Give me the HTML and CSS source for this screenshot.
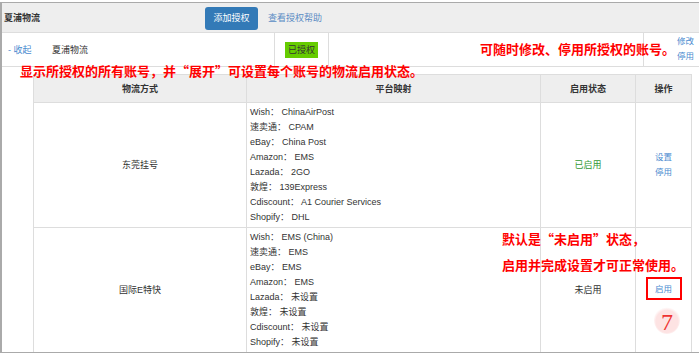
FILE: index.html
```html
<!DOCTYPE html>
<html>
<head>
<meta charset="utf-8">
<title>授权物流</title>
<meta name="viewport" content="width=device-width, initial-scale=1">
<link rel="stylesheet" href="styles.css">
</head>
<body>

<div class="panel">
  <div class="panel-head">
    <span class="panel-title">夏浦物流</span>
    <a class="btn-add">添加授权</a>
    <a class="help-link">查看授权帮助</a>
  </div>

  <div class="account-row">
    <div class="cell-name">
      <a class="toggle">- 收起</a>
      <span>夏浦物流</span>
    </div>
    <div class="cell-state"><span class="badge-ok">已授权</span></div>
    <div class="cell-blank"></div>
    <div class="cell-ops">
      <a>修改</a>
      <a>停用</a>
    </div>
  </div>

  <div class="detail">
    <table class="ship-table">
      <colgroup>
        <col class="c1"><col class="c2"><col class="c3"><col class="c4">
      </colgroup>
      <thead>
        <tr>
          <th>物流方式</th>
          <th>平台映射</th>
          <th>启用状态</th>
          <th>操作</th>
        </tr>
      </thead>
      <tbody>
        <tr class="row-a">
          <td class="center">东莞挂号</td>
          <td class="map">
            Wish： ChinaAirPost<br>
            速卖通： CPAM<br>
            eBay： China Post<br>
            Amazon： EMS<br>
            Lazada： 2GO<br>
            敦煌： 139Express<br>
            Cdiscount： A1 Courier Services<br>
            Shopify： DHL
          </td>
          <td class="center on">已启用</td>
          <td class="center ops"><a>设置</a><br><a>停用</a></td>
        </tr>
        <tr class="row-b">
          <td class="center">国际E特快</td>
          <td class="map">
            Wish： EMS (China)<br>
            速卖通： EMS<br>
            eBay： EMS<br>
            Amazon： EMS<br>
            Lazada： 未设置<br>
            敦煌： 未设置<br>
            Cdiscount： 未设置<br>
            Shopify： 未设置
          </td>
          <td class="center">未启用</td>
          <td class="center ops"><a>启用</a></td>
        </tr>
      </tbody>
    </table>
  </div>

  <!-- annotations drawn over the screen -->
  <div class="note note-1">显示所授权的所有账号，并“展开”可设置每个账号的物流启用状态。</div>
  <div class="note note-2">可随时修改、停用所授权的账号。</div>
  <div class="note note-3">默认是“未启用”状态，<br>启用并完成设置才可正常使用。</div>
  <div class="mark-box"></div>
  <div class="step-num">7</div>
</div>
<div class="below"></div>

</body>
</html>
```
FILE: styles.css
```css
* {
  box-sizing: border-box;
}

body {
  margin: 0;
  padding-top: 2px;
  background: #fff;
  font-family: "Liberation Sans", "Noto Sans CJK SC", sans-serif;
  font-size: 9px;
  color: #333;
}

a {
  color: #4a8bd0;
  cursor: pointer;
}

.panel {
  position: relative;
  border-top: 1px solid #aaa;
  border-left: 2px solid #aaa;
  border-bottom: 1px solid #aaa;
}

.panel-head {
  height: 30px;
  display: flex;
  align-items: center;
  background: #eee;
  border-bottom: 1px solid #ddd;
  padding-left: 2px;
}

.panel-title {
  font-weight: bold;
  width: 201px;
}

.btn-add {
  background: #337ab7;
  color: #fff;
  border-radius: 3px;
  height: 23px;
  line-height: 23px;
  width: 53px;
  text-align: center;
  margin-top: 1px;
}

.help-link {
  margin-left: 10px;
  color: #5a8cc4;
}

.account-row {
  display: flex;
  height: 34px;
  border-bottom: 1px solid #ddd;
}

.cell-name {
  width: 273px;
  border-right: 1px solid #ddd;
  display: flex;
  align-items: center;
  padding-left: 6px;
}

.toggle {
  width: 44px;
}

.cell-state {
  width: 54px;
  border-right: 1px solid #ddd;
  display: flex;
  align-items: center;
  justify-content: center;
}

.badge-ok {
  background: #6c0;
  color: #333;
  padding: 1px 3px;
  line-height: 14px;
}

.cell-blank {
  width: 315px;
  border-right: 1px solid #ddd;
}

.cell-ops {
  display: flex;
  flex-direction: column;
  justify-content: center;
  padding-left: 33px;
  font-size: 8.5px;
  line-height: 15px;
  padding-bottom: 2px;
}

.detail {
  padding: 7px 8px 0 31px;
}

.ship-table {
  width: 658px;
  border-collapse: collapse;
  table-layout: fixed;
  border: 1px solid #ddd;
  border-bottom: none;
}

.c1 { width: 213px; }
.c2 { width: 294px; }
.c3 { width: 95px; }
.c4 { width: 56px; }

.ship-table th {
  background: #eee;
  height: 28px;
  font-weight: bold;
  border: 1px solid #ddd;
}

.ship-table td {
  border-left: 1px solid #ddd;
  border-right: 1px solid #ddd;
  vertical-align: middle;
  line-height: 15px;
}

.row-a td {
  border-bottom: 1px solid #ddd;
  height: 124px;
}

.row-b td {
  height: 122px;
}

.center {
  text-align: center;
}

.map {
  padding: 2px 3px;
}

.on {
  color: #393;
}

.ops {
  font-size: 8.5px;
}

.row-b .ops {
  padding-bottom: 2px;
}

.note {
  position: absolute;
  color: #f00;
  font-family: "Noto Sans CJK SC", sans-serif;
  font-weight: bold;
  font-size: 13px;
  line-height: 26px;
  white-space: nowrap;
}

.note-1 {
  left: 18px;
  top: 55px;
}

.note-2 {
  left: 478px;
  top: 33px;
}

.note-3 {
  left: 500px;
  top: 223px;
}

.mark-box {
  position: absolute;
  left: 644px;
  top: 274px;
  width: 36px;
  height: 23px;
  border: 2px solid #f00;
}

.step-num {
  position: absolute;
  left: 652px;
  top: 303px;
  width: 26px;
  height: 28px;
  border-radius: 50%;
  background: radial-gradient(circle at 50% 55%, #fde3e3 55%, rgba(255, 255, 255, 0) 70%);
  color: #e33;
  font-family: "Liberation Serif", serif;
  font-size: 24px;
  line-height: 32px;
  text-align: center;
}

.below {
  height: 20px;
  background: #f2f2f2;
}
```
